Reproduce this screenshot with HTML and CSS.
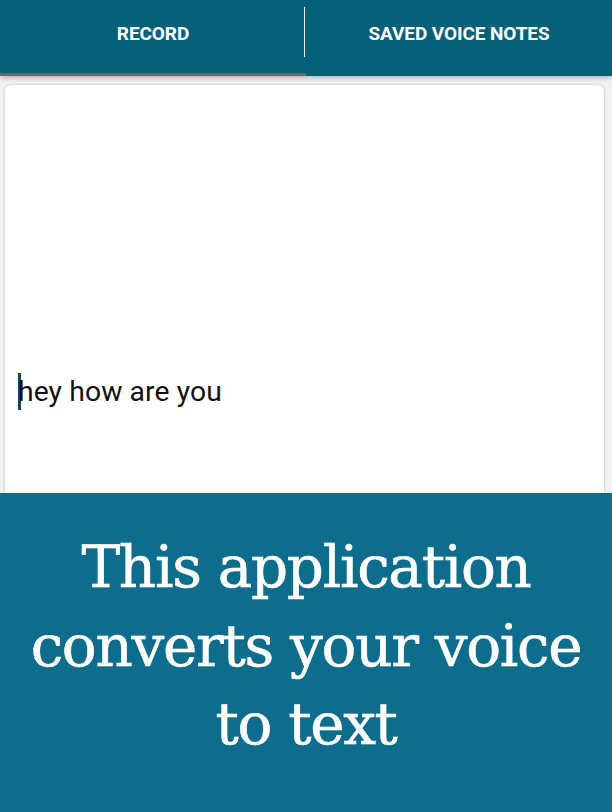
FILE: index.html
```html
<!DOCTYPE html>
<html>
<head>
<meta charset="utf-8">
<link rel="stylesheet" href="styles.css">
</head>
<body>
<div class="app">
  <nav class="tabs">
    <div class="tab active">RECORD</div>
    <div class="sep"></div>
    <div class="tab">SAVED VOICE NOTES</div>
  </nav>
  <main class="content">
    <div class="card">
      <div class="note"><span class="caret"></span>hey how are you</div>
    </div>
  </main>
  <section class="banner">
    <p class="banner-text">This application converts your voice to text</p>
  </section>
</div>
</body>
</html>
```
FILE: styles.css
```css
html, body { margin: 0; padding: 0; }
body { width: 612px; height: 812px; overflow: hidden; background: #f2f2f2; font-family: Roboto, "Liberation Sans", sans-serif; }
.app { display: flex; flex-direction: column; height: 812px; }
.tabs {
  position: relative; z-index: 2;
  display: flex; align-items: flex-start;
  height: 76px; background: #07607a;
  box-shadow: 0 2px 5px rgba(0,0,0,0.25);
  flex: none;
}
.tab {
  flex: 1; height: 73px; box-sizing: border-box;
  display: flex; align-items: center; justify-content: center;
  padding-bottom: 6px;
  color: #fff; font-weight: 700; font-size: 19px; letter-spacing: -0.1px;
}
.tab.active { height: 76px; border-bottom: 3px solid #676767; padding-bottom: 6px; margin-right: -1px; }
.sep { width: 1px; height: 50px; margin-top: 7px; background: #e8eef0; flex: none; position: relative; left: -1px; }
.content { flex: 1; padding: 9px 8px 0 5px; display: flex; min-height: 0; }
.card {
  flex: 1; background: #fff; border-radius: 6px 6px 0 0;
  box-shadow: 0 0 3px rgba(0,0,0,0.25);
  padding: 288px 0 0 13px;
}
.note { font-size: 28.3px; color: #111; display: flex; align-items: center; letter-spacing: 0.1px; }
.caret { display: inline-block; width: 3px; height: 37px; background: #0b4a5e; margin-right: -3px; }
.banner {
  flex: none; height: 319px; background: #0e6d8c;
  display: flex; justify-content: center; padding-top: 35px; box-sizing: border-box;
}
.banner-text {
  margin: 0; color: #fff; text-align: center;
  font-family: "DejaVu Serif", serif; font-size: 58px; line-height: 78.5px;
  letter-spacing: -1.3px; width: 600px;
  -webkit-text-stroke: 0.6px #fff;
}
```
